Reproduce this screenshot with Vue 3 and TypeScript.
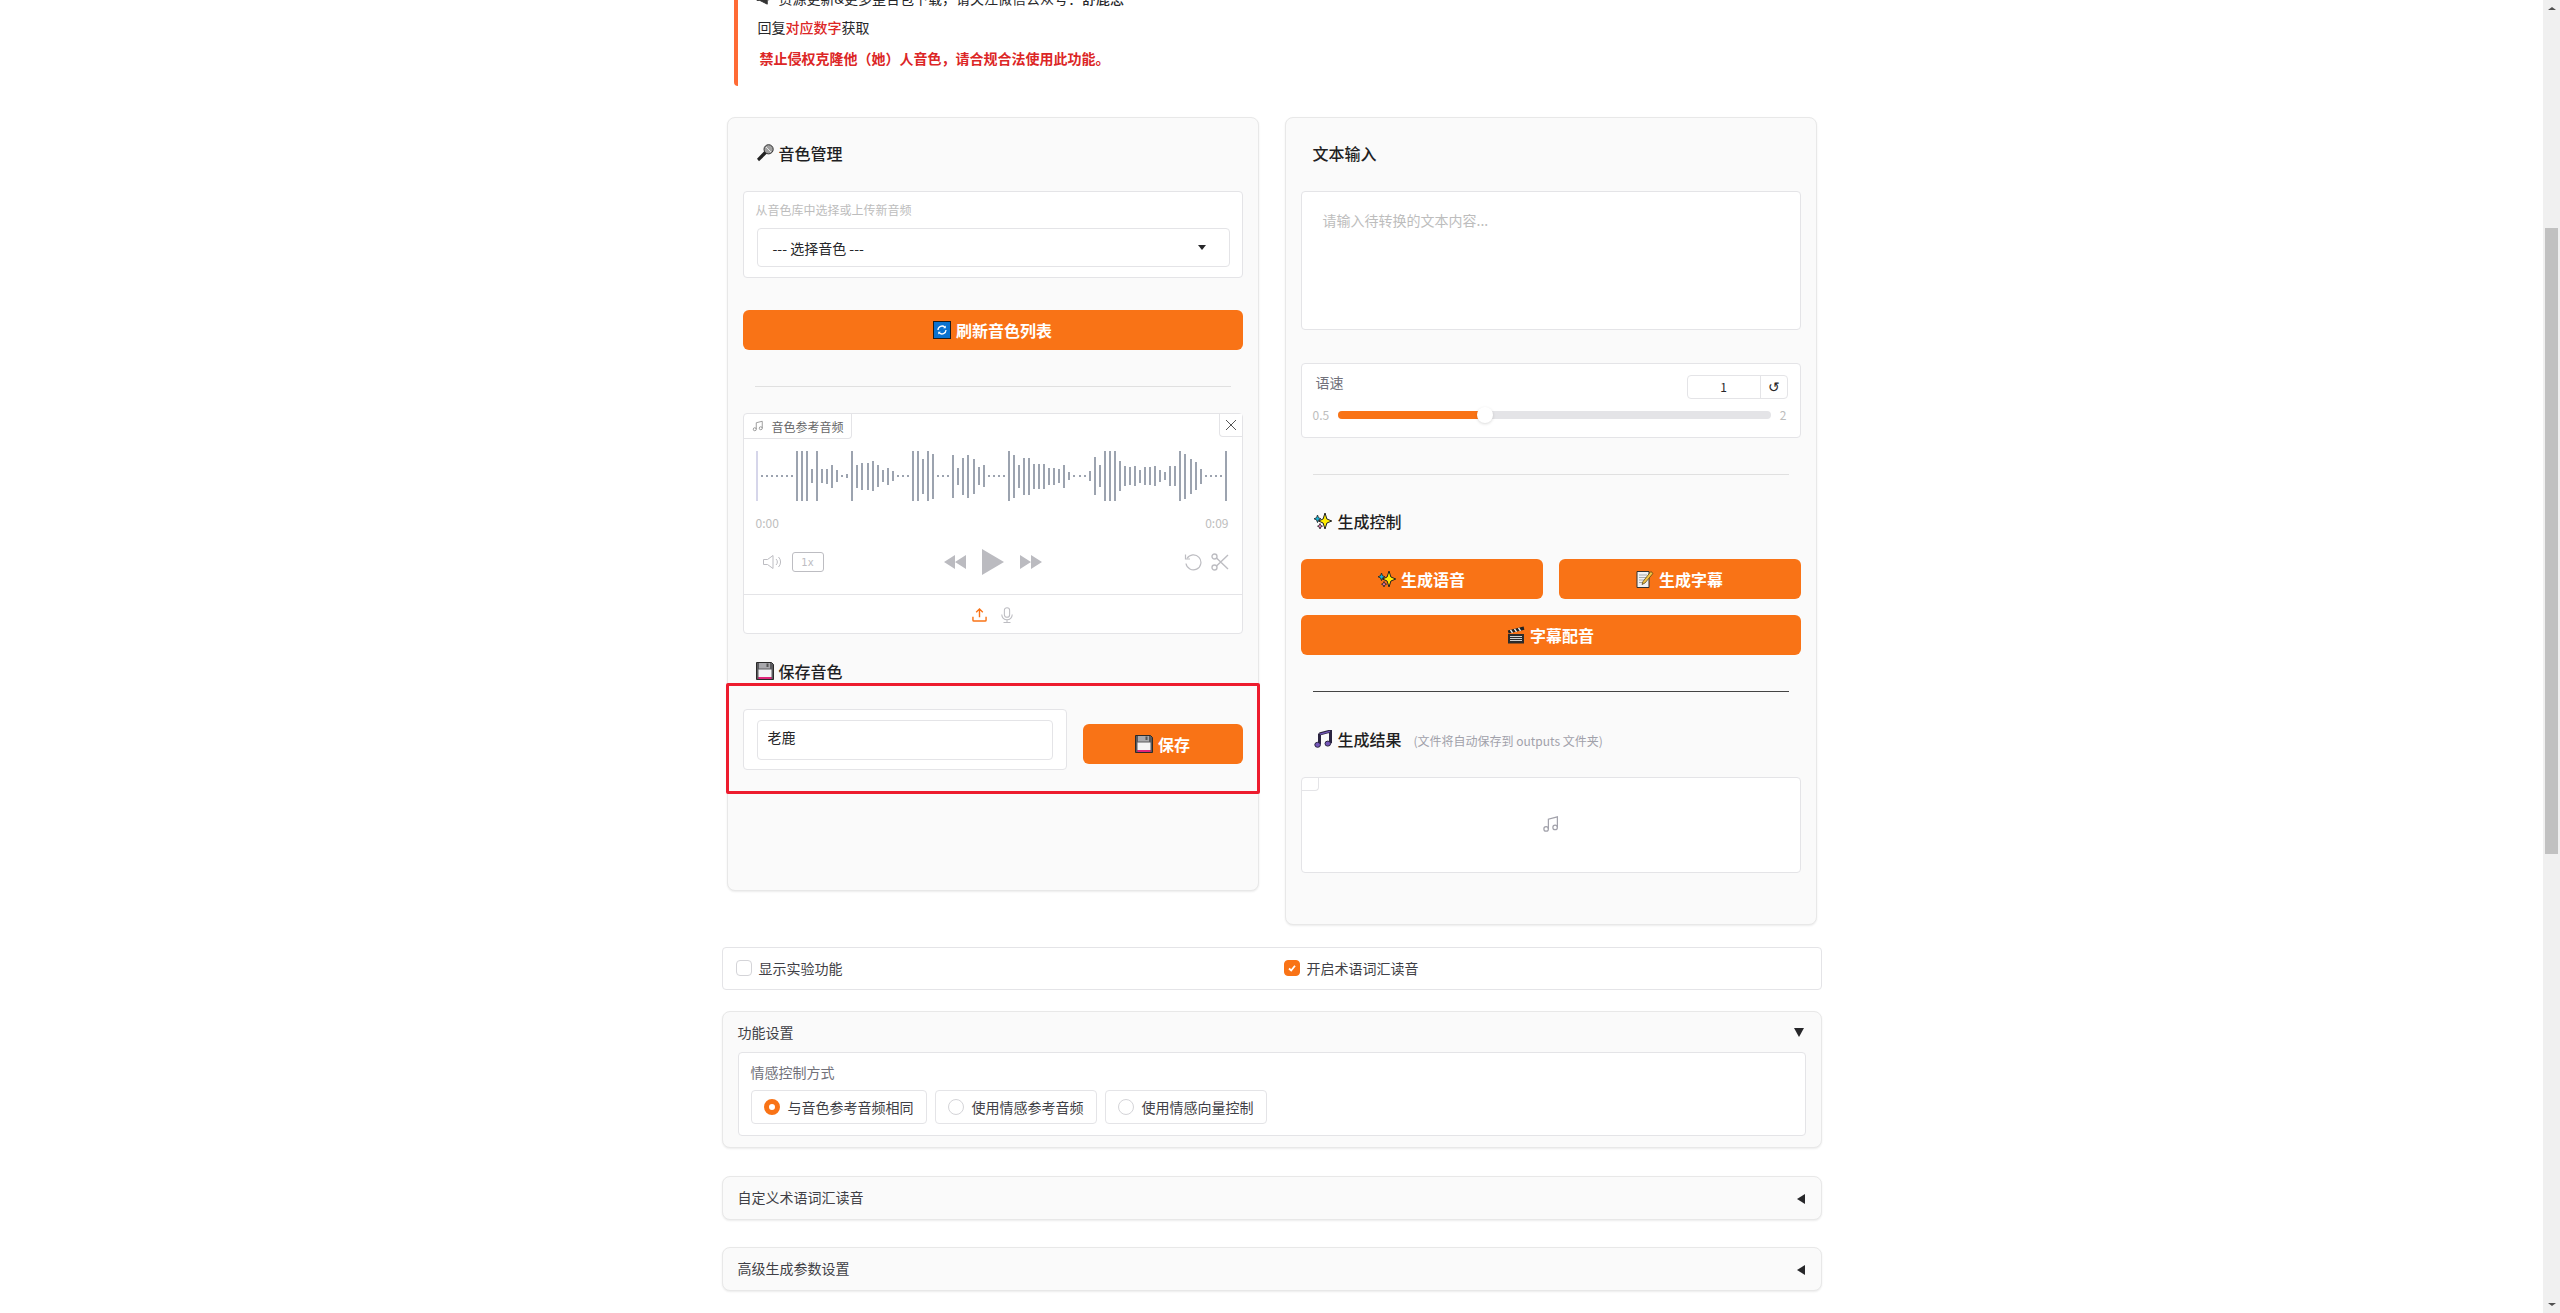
<template>
  <div class="app">
    <svg class="defs" aria-hidden="true">
      <symbol id="e-mic" viewBox="0 0 18 18">
        <path d="M9 6.500 1 14.800 3 17.300 11.500 9z" fill="#222" />
        <circle cx="12.600" cy="5.300" r="4.600" fill="#a0a0a0" stroke="#333" stroke-width="1" />
        <path d="M10 3 15 8" stroke="#e6e6e6" stroke-width="1" />
      </symbol>
      <symbol id="e-refresh" viewBox="0 0 18 18">
        <rect x=".5" y=".5" width="17" height="17" fill="#0a72cf" stroke="#1c1c1c" />
        <path d="M5 9a4 4 0 0 1 6.800-2.800M13 9a4 4 0 0 1-6.800 2.800" fill="none" stroke="#fff" stroke-width="1.300" />
        <path d="M12.800 4.600v2.600h-2.600zM5.200 13.400v-2.600h2.600z" fill="#fff" />
      </symbol>
      <symbol id="e-floppy" viewBox="0 0 18 18">
        <path d="M.5.500h15l2 2v15H.500z" fill="#5a5a5e" stroke="#2a2a2a" />
        <rect x="3" y="1" width="11" height="5.500" fill="#a8a8ac" />
        <rect x="10.500" y="1.500" width="2" height="3.500" fill="#555" />
        <rect x="2.500" y="7.500" width="13" height="7.500" fill="#f4f4f6" />
        <rect x="2.500" y="15" width="13" height="2" fill="#e0247a" />
      </symbol>
      <symbol id="e-sparkles" viewBox="0 0 18 18">
        <path d="M11 1 12.900 7 17.800 9 12.900 11 11 17 9.100 11 4.500 9 9.100 7z" fill="#ffec00" stroke="#222" stroke-width="1" />
        <path d="M3.500 3 4.500 5.700 7 6.800 4.500 7.900 3.500 10.600 2.500 7.900 0 6.800 2.500 5.700z" fill="#17b4d8" stroke="#222" stroke-width=".8" />
        <path d="M6 11.500 6.800 13.400 8.500 14.200 6.800 15 6 17 5.200 15 3.500 14.200 5.200 13.400z" fill="#e678b4" stroke="#222" stroke-width=".8" />
      </symbol>
      <symbol id="e-memo" viewBox="0 0 18 18">
        <path d="M1 1.500h12v16H1z" fill="#f2f2f2" stroke="#333" />
        <path d="M3 5h8M3 7.500h8M3 10h6M3 12.500h5" stroke="#aaa" stroke-width="1" />
        <path d="M6 14.500 7 11.500 14.800 1.500 17 3.400 9 13z" fill="#f5c542" stroke="#4a3a10" stroke-width=".7" />
      </symbol>
      <symbol id="e-clapper" viewBox="0 0 18 18">
        <path d="M1 8h16v9.500H1z" fill="#2b2b2b" />
        <path d="M3 10.500h12M3 12.500h12M3 14.500h12" stroke="#cfcfcf" stroke-width="1" />
        <path d="M.8 4.400 16.600.6 17.400 3.800 1.600 7.600z" fill="#222" />
        <path d="M3.500 3.800 5.500 6.800M7.500 2.800 9.500 5.800M11.500 1.900 13.500 4.900" stroke="#eee" stroke-width="1.400" />
      </symbol>
      <symbol id="e-music" viewBox="0 0 18 18">
        <path d="M5.500 4 16.500 1v12.200" fill="none" stroke="#2a2440" stroke-width="3" />
        <path d="M5.500 3.500v10.800" fill="none" stroke="#2a2440" stroke-width="3" />
        <ellipse cx="3.600" cy="14.800" rx="2.800" ry="2.500" fill="#7456b8" stroke="#2a2440" />
        <ellipse cx="13.800" cy="13.600" rx="2.800" ry="2.500" fill="#7456b8" stroke="#2a2440" />
        <path d="M6 4.200 16 1.400" stroke="#7456b8" stroke-width="1.200" />
      </symbol>
      <symbol id="i-note" viewBox="0 0 24 24">
        <circle cx="5.500" cy="18.500" r="3" fill="none" stroke="currentColor" stroke-width="1.600" />
        <circle cx="17.500" cy="16.500" r="3" fill="none" stroke="currentColor" stroke-width="1.600" />
        <path d="M8.500 18.500V5.500l12-3v14" fill="none" stroke="currentColor" stroke-width="1.600" />
      </symbol>
    </svg>

    <main class="viewport">
      <div class="page">
        <div class="notice">
          <p class="line first-line">
            <svg class="horn" viewBox="0 0 16 16" aria-hidden="true"><path d="M1 6h3l8-4v12l-8-4H1zM13.500 6v4" fill="#333" stroke="#333" /></svg>
            资源更新&amp;更多整合包下载，请关注微信公众号：<b>舒鹿思</b>
          </p>
          <p class="line second-line">回复<b class="red">对应数字</b>获取</p>
          <p class="line warn">禁止侵权克隆他（她）人音色，请合规合法使用此功能。</p>
        </div>

        <div class="columns">
          <section class="card left">
            <h3 class="heading"><svg class="emoji"><use href="#e-mic" /></svg>音色管理</h3>

            <div class="block picker">
              <div class="field-label">从音色库中选择或上传新音频</div>
              <div class="select">
                <span>--- 选择音色 ---</span>
                <i class="caret" />
              </div>
            </div>

            <button type="button" class="btn refresh"><svg class="emoji"><use href="#e-refresh" /></svg>刷新音色列表</button>
            <hr class="rule" />

            <div class="block audio">
              <div class="tab">
                <svg class="tab-icon"><use href="#i-note" /></svg>
                音色参考音频
              </div>
              <button type="button" class="close" aria-label="关闭">
                <svg viewBox="0 0 12 12" width="12" height="12"><path d="M1 1l10 10M11 1 1 11" stroke="#555" stroke-width="1" /></svg>
              </button>
              <div class="wave">
                <i class="bar cursor" />
                <i
                  v-for="(h, i) in bars"
                  :key="i"
                  class="bar"
                  :style="{ height: h + 'px' }"
                />
              </div>
              <div class="times"><span>0:00</span><span>0:09</span></div>
              <div class="controls">
                <div class="ctl-left">
                  <svg viewBox="0 0 20 16" width="20" height="16" fill="none" stroke="#bdbdc2" stroke-width="1">
                    <path d="M.5 5.500h4L10 1.500v13l-5.500-4h-4z" />
                    <path d="M13 5a4 4 0 0 1 0 6M15.500 3a7 7 0 0 1 0 10" />
                  </svg>
                  <span class="rate">1x</span>
                </div>
                <div class="ctl-mid">
                  <svg viewBox="0 0 22 16" width="22" height="16" fill="#bbbbc0"><path d="M0 8 11 1v14zM11 8 22 1v14z" /></svg>
                  <svg viewBox="0 0 22 26" width="22" height="26" fill="#bbbbc0"><path d="M0 0 22 13 0 26z" /></svg>
                  <svg viewBox="0 0 22 16" width="22" height="16" fill="#bbbbc0"><path d="M0 1 11 8 0 15zM11 1 22 8 11 15z" /></svg>
                </div>
                <div class="ctl-right">
                  <svg viewBox="0 0 18 18" width="18" height="18" fill="none" stroke="#bdbdc2" stroke-width="1.200">
                    <path d="M3 5.500a7.500 7.500 0 1 1-1 5" />
                    <path d="M1.500 1.500v4.500H6" />
                  </svg>
                  <svg viewBox="0 0 18 18" width="18" height="18" fill="none" stroke="#bdbdc2" stroke-width="1.400">
                    <circle cx="3.500" cy="3.500" r="2.500" />
                    <circle cx="3.500" cy="14.500" r="2.500" />
                    <path d="M5.500 5 17 16M5.500 13 17 2" />
                  </svg>
                </div>
              </div>
              <div class="sources">
                <svg viewBox="0 0 16 16" width="15" height="15" fill="none" stroke="#f97316" stroke-width="1.500">
                  <path d="M8 11V2M4.500 5.500 8 2l3.500 3.500M1 10.500V14a1 1 0 0 0 1 1h12a1 1 0 0 0 1-1v-3.500" />
                </svg>
                <svg viewBox="0 0 16 18" width="14" height="16" fill="none" stroke="#bdbdc2" stroke-width="1.200">
                  <rect x="5" y=".6" width="6" height="11" rx="3" />
                  <path d="M2 8.500a6 6 0 0 0 12 0M8 14.500v3M4 17.500h8" />
                </svg>
              </div>
            </div>

            <h3 class="heading save-head"><svg class="emoji"><use href="#e-floppy" /></svg>保存音色</h3>
            <div class="save-row">
              <div class="block name-box">
                <input class="text-input" type="text" value="老鹿" />
              </div>
              <button type="button" class="btn save"><svg class="emoji"><use href="#e-floppy" /></svg>保存</button>
              <!-- 截图上的红色标注框 -->
              <div class="mark" />
            </div>
          </section>

          <section class="card right">
            <h3 class="heading plain">文本输入</h3>
            <textarea class="block area" placeholder="请输入待转换的文本内容..." />

            <div class="block speed">
              <div class="speed-top">
                <span class="speed-label">语速</span>
                <div class="number">
                  <span class="num-value">1</span>
                  <span class="num-reset">↺</span>
                </div>
              </div>
              <div class="slider">
                <span>0.5</span>
                <div class="track">
                  <div class="fill" :style="{ width: speedPct + '%' }" />
                  <i class="thumb" :style="{ left: speedPct + '%' }" />
                </div>
                <span>2</span>
              </div>
            </div>
            <hr class="rule" />

            <h3 class="heading tight control-head"><svg class="emoji"><use href="#e-sparkles" /></svg>生成控制</h3>
            <div class="btn-grid">
              <button type="button" class="btn"><svg class="emoji"><use href="#e-sparkles" /></svg>生成语音</button>
              <button type="button" class="btn"><svg class="emoji"><use href="#e-memo" /></svg>生成字幕</button>
              <button type="button" class="btn span2"><svg class="emoji"><use href="#e-clapper" /></svg>字幕配音</button>
            </div>
            <hr class="rule dark" />

            <h3 class="heading tight result-head">
              <svg class="emoji"><use href="#e-music" /></svg>生成结果
              <small class="hint">(文件将自动保存到 outputs 文件夹)</small>
            </h3>
            <div class="block output">
              <i class="out-tab" />
              <svg class="out-note"><use href="#i-note" /></svg>
            </div>
          </section>
        </div>

        <div class="checks">
          <label class="check"><i class="box" />显示实验功能</label>
          <label class="check"><i class="box on"><svg viewBox="0 0 12 12" width="12" height="12"><path d="M3 6.500 5.200 8.500 9 3.800" fill="none" stroke="#fff" stroke-width="1.800" /></svg></i>开启术语词汇读音</label>
        </div>

        <section class="panel first">
          <div class="panel-head"><span>功能设置</span><i class="tri down" /></div>
          <div class="emotion">
            <div class="emotion-label">情感控制方式</div>
            <div class="radios">
              <label v-for="(r, i) in radios" :key="r" class="radio">
                <i class="dot" :class="{ on: i === 0 }" />{{ r }}
              </label>
            </div>
          </div>
        </section>

        <section class="panel closed one">
          <div class="panel-head"><span>自定义术语词汇读音</span><i class="tri" /></div>
        </section>
        <section class="panel closed two">
          <div class="panel-head"><span>高级生成参数设置</span><i class="tri" /></div>
        </section>
      </div>
    </main>

    <aside class="scrollbar" aria-hidden="true">
      <i class="arrow up" />
      <div class="thumb-area"><div class="sb-thumb" /></div>
      <i class="arrow dn" />
    </aside>
  </div>
</template>

<script setup lang="ts">
// 波形高度は目視で読み取った値。2 は無音の点線部分。
const bars: number[] = [
  2, 2, 2, 2, 2, 2, 2,
  50, 50, 50, 14, 50, 14, 15, 23, 12, 2, 4, 50, 23, 27, 27, 30, 22, 12, 17, 10,
  2, 2, 2,
  50, 50, 35, 50, 45,
  2, 2, 2,
  43, 17, 37, 43, 35, 18, 22,
  2, 2, 2, 2,
  50, 43, 23, 37, 37, 25, 25, 25, 17, 17, 14, 23, 8,
  2, 2, 2,
  10, 38, 22, 50, 50, 50, 30, 20, 18, 20, 13, 18, 18, 20, 12, 8, 20, 20, 50, 45, 35, 28, 15,
  2, 2, 2, 2, 50,
]

const radios: string[] = ['与音色参考音频相同', '使用情感参考音频', '使用情感向量控制']
const speedPct = 34
</script>

<style scoped>
.app {
  display: flex; height: 100vh; overflow: hidden; background: #fff;
  font-family: "Noto Sans CJK SC", "Noto Sans", sans-serif; font-size: 14px; color: #27272a;
}
.defs { position: absolute; width: 0; height: 0; }
.viewport { flex: 1; min-width: 0; overflow: hidden; }
.page { width: 1100px; margin: -40px auto 0; }

.notice {
  margin-left: 12px; padding: 27px 0 17px 19px;
  border-left: 4px solid #ff6b35; border-radius: 0 0 0 4px;
  display: flex; flex-direction: column; gap: 8px;
}
.line { margin: 0; line-height: 22px; color: #27272a; }
.line b { font-weight: 500; }
.line .red { color: #dc2626; }
.first-line { display: flex; align-items: center; margin-left: -1px; }
.horn { width: 15px; height: 15px; margin-right: 8px; }
.second-line { margin: -1px 0 1px 1px; }
.warn { color: #dc2626; font-weight: 600; padding-left: 3px; }

.columns { display: flex; align-items: flex-start; gap: 26px; margin-top: 31px; padding: 0 5px; }
.card {
  flex: 1; min-width: 0; box-sizing: border-box; padding: 0 15px;
  background: #fafafa; border: 1px solid #e8e8e8; border-radius: 8px;
  box-shadow: 0 1px 2px rgba(0,0,0,.08);
}
.left { height: 774px; }
.right { height: 808px; }

.heading {
  display: flex; align-items: center; gap: 5px; height: 22px; margin: 24px 0 27px 13px;
  font-size: 16px; line-height: 22px; font-weight: 500; color: #1f1f23;
}
.heading.plain { margin-left: 12px; }
.heading.tight { margin: 36px 0 26px 13px; gap: 6px; }
.control-head { margin: 35px 0 27px 13px !important; }
.result-head { margin-bottom: 27px !important; }
.emoji { width: 18px; height: 18px; flex-shrink: 0; }
.hint { margin-left: 6px; font-size: 12px; font-weight: 400; color: #a1a1aa; position: relative; top: 2px; }

.block { box-sizing: border-box; background: #fff; border: 1px solid #e4e4e7; border-radius: 4px; }

.picker { height: 87px; padding: 8px 12px 10px; }
.field-label { line-height: 20px; font-size: 12px; color: #bdbdbd; margin-bottom: 8px; }
.select {
  box-sizing: border-box; height: 39px; margin-left: 1px; padding: 0 23px 0 15px;
  display: flex; align-items: center; justify-content: space-between;
  border: 1px solid #e4e4e7; border-radius: 4px; color: #27272a;
}
.caret { width: 0; height: 0; border: 4px solid transparent; border-top: 5px solid #27272a; border-bottom: 0; }

.btn {
  display: flex; align-items: center; justify-content: center; gap: 5px; height: 40px; padding: 0 0 1px;
  background: #f97316; color: #fff; border: 0; border-radius: 6px; cursor: pointer;
  font-family: inherit; font-size: 16px; font-weight: 700;
}
.refresh { width: 100%; margin-top: 32px; }

.rule { height: 1px; margin: 36px 12px 0; border: 0; background: #e0e0e0; }
.rule.dark { background: #444; }

.audio { position: relative; height: 221px; margin-top: 26px; }
.tab {
  display: flex; align-items: center; gap: 8px; width: 108px; height: 25px; box-sizing: border-box;
  padding-left: 8px; font-size: 12px; color: #666;
  border-right: 1px solid #e4e4e7; border-bottom: 1px solid #e4e4e7; border-radius: 0 0 4px 0;
}
.tab-icon { width: 12px; height: 12px; color: #888; flex-shrink: 0; }
.close {
  position: absolute; top: 0; right: 0; width: 23px; height: 23px; padding: 0;
  display: flex; align-items: center; justify-content: center;
  background: #fff; border: 0; border-left: 1px solid #e4e4e7; border-bottom: 1px solid #e4e4e7; border-radius: 0 0 0 4px;
}
.wave { display: flex; align-items: center; justify-content: space-between; height: 50px; margin: 12px 14px 0 12px; }
.bar { display: block; width: 2px; background: #9ca3af; flex-shrink: 0; }
.bar.cursor { height: 50px; background: #d6d6ea; }

.times { display: flex; justify-content: space-between; margin: 12px 13px 0 12px; line-height: 20px; font-size: 12px; color: #bdbdbd; }
.controls { display: flex; align-items: center; justify-content: space-between; height: 26px; margin: 16px 13px 0 19px; position: relative; }
.ctl-left, .ctl-mid, .ctl-right { display: flex; align-items: center; }
.ctl-left { gap: 9px; }
.ctl-mid { gap: 16px; position: absolute; left: 181px; }
.ctl-right { gap: 9px; }
.rate {
  box-sizing: border-box; width: 32px; height: 20px; display: flex; align-items: center; justify-content: center;
  border: 1px solid #bdbdc2; border-radius: 3px; font-size: 10px; color: #bdbdc2; font-family: "DejaVu Sans", sans-serif;
}
.sources {
  display: flex; align-items: center; justify-content: center; gap: 13px; height: 39px; margin-top: 19px;
  border-top: 1px solid #e4e4e7;
}

.save-head { margin: 26px 0 27px 13px; }
.save-row { position: relative; display: flex; align-items: flex-start; gap: 16px; }
.name-box { width: 324px; height: 61px; padding: 10px 13px; }
.text-input {
  box-sizing: border-box; width: 100%; height: 40px; padding: 0 10px 6px; outline: none;
  border: 1px solid #e4e4e7; border-radius: 4px; font-family: inherit; font-size: 14px; color: #27272a;
}
.save { width: 160px; margin-top: 15px; }
.mark {
  position: absolute; left: -17px; right: -17px; top: -26.5px; bottom: -24px; box-sizing: border-box;
  border: 3px solid #ed1c2e; border-radius: 2px; pointer-events: none;
}

.area {
  display: block; width: 100%; height: 139px; padding: 18px 21px; resize: none; outline: none;
  font-family: inherit; font-size: 14px; line-height: 21px;
}
.area::placeholder { color: #bdbdbd; }

.speed { height: 75px; margin-top: 33px; padding: 11px 12px 0 14px; }
.speed-top { display: flex; justify-content: space-between; align-items: flex-start; }
.speed-label { line-height: 18px; color: #71717a; margin-top: -2px; }
.number {
  display: flex; box-sizing: border-box; width: 101px; height: 24px;
  border: 1px solid #e4e4e7; border-radius: 4px;
}
.num-value { flex: 1; text-align: center; line-height: 22px; font-size: 12px; border-right: 1px solid #e4e4e7; }
.num-reset { width: 26px; text-align: center; line-height: 20px; font-size: 14px; }
.slider { display: flex; align-items: center; gap: 9px; margin: 8px 1px 0 -3px; font-size: 12px; color: #bdbdbd; line-height: 16px; }
.track { position: relative; flex: 1; height: 8px; background: #e4e4e7; border-radius: 4px; }
.fill { height: 100%; background: #f97316; border-radius: 4px 0 0 4px; }
.thumb {
  position: absolute; top: 50%; width: 16px; height: 16px; margin: -8px 0 0 -8px;
  background: #fff; border-radius: 50%; box-shadow: 0 1px 3px rgba(0,0,0,.15);
}

.btn-grid { display: grid; grid-template-columns: 1fr 1fr; gap: 16px; }
.span2 { grid-column: span 2; }

.output { position: relative; height: 96px; display: flex; align-items: center; justify-content: center; padding-bottom: 2px; }
.out-tab {
  position: absolute; top: 0; left: 0; width: 17px; height: 13px; box-sizing: border-box;
  border-right: 1px solid #e4e4e7; border-bottom: 1px solid #e4e4e7; border-radius: 0 0 4px 0;
}
.out-note { width: 18px; height: 18px; color: #a1a1aa; }

.checks {
  display: grid; grid-template-columns: 548px 1fr; align-items: center; height: 43px; box-sizing: border-box;
  margin-top: 22px; padding: 0 0 2px 13px; background: #fff; border: 1px solid #e4e4e7; border-radius: 4px;
}
.check { display: flex; align-items: center; gap: 7px; color: #3f3f46; }
.box {
  display: flex; align-items: center; justify-content: center; box-sizing: border-box; width: 16px; height: 16px;
  border: 1px solid #d4d4d8; border-radius: 4px; background: #fff;
}
.box.on { background: #f97316; border-color: #f97316; }

.panel {
  box-sizing: border-box; background: #fafafa; border: 1px solid #e8e8e8; border-radius: 8px;
  box-shadow: 0 1px 2px rgba(0,0,0,.08); padding: 0 15px;
}
.first { height: 137px; margin-top: 21px; }
.closed { height: 44px; }
.closed.one { margin-top: 28px; }
.closed.two { margin-top: 27px; }
.panel-head { display: flex; align-items: center; justify-content: space-between; height: 40px; color: #3f3f46; }
.tri { width: 0; height: 0; border-style: solid; border-width: 5px 8px 5px 0; border-color: transparent #27272a transparent transparent; margin: 3px 1px 0 0; }
.tri.down { border-width: 9px 5px 0; border-color: #27272a transparent transparent; margin: 1px 2px 0 0; }

.emotion {
  box-sizing: border-box; height: 84px; padding: 9px 12px 0;
  background: #fff; border: 1px solid #e4e4e7; border-radius: 4px;
}
.emotion-label { line-height: 20px; color: #71717a; }
.radios { display: flex; gap: 8px; margin-top: 8px; }
.radio {
  display: flex; align-items: center; gap: 8px; height: 34px; box-sizing: border-box; padding: 0 12px;
  border: 1px solid #e4e4e7; border-radius: 4px; color: #3f3f46;
}
.dot { box-sizing: border-box; width: 16px; height: 16px; border: 1px solid #d4d4d8; border-radius: 50%; background: #fff; }
.dot.on { border: 5px solid #f97316; }

.scrollbar {
  flex: 0 0 17px; background: #f0f0f0; display: flex; flex-direction: column; align-items: center;
}
.thumb-area { flex: 1; width: 100%; }
.sb-thumb { width: 13px; height: 626px; margin: 211px auto 0; background: #c1c1c1; }
.arrow { width: 0; height: 0; margin: 7px 0; border: 4px solid transparent; }
.arrow.up { border-top: 0; border-bottom: 3px solid #505050; }
.arrow.dn { border-bottom: 0; border-top: 3px solid #505050; }
</style>

<style>
html, body { margin: 0; overflow: hidden; background: #fff; }
</style>
